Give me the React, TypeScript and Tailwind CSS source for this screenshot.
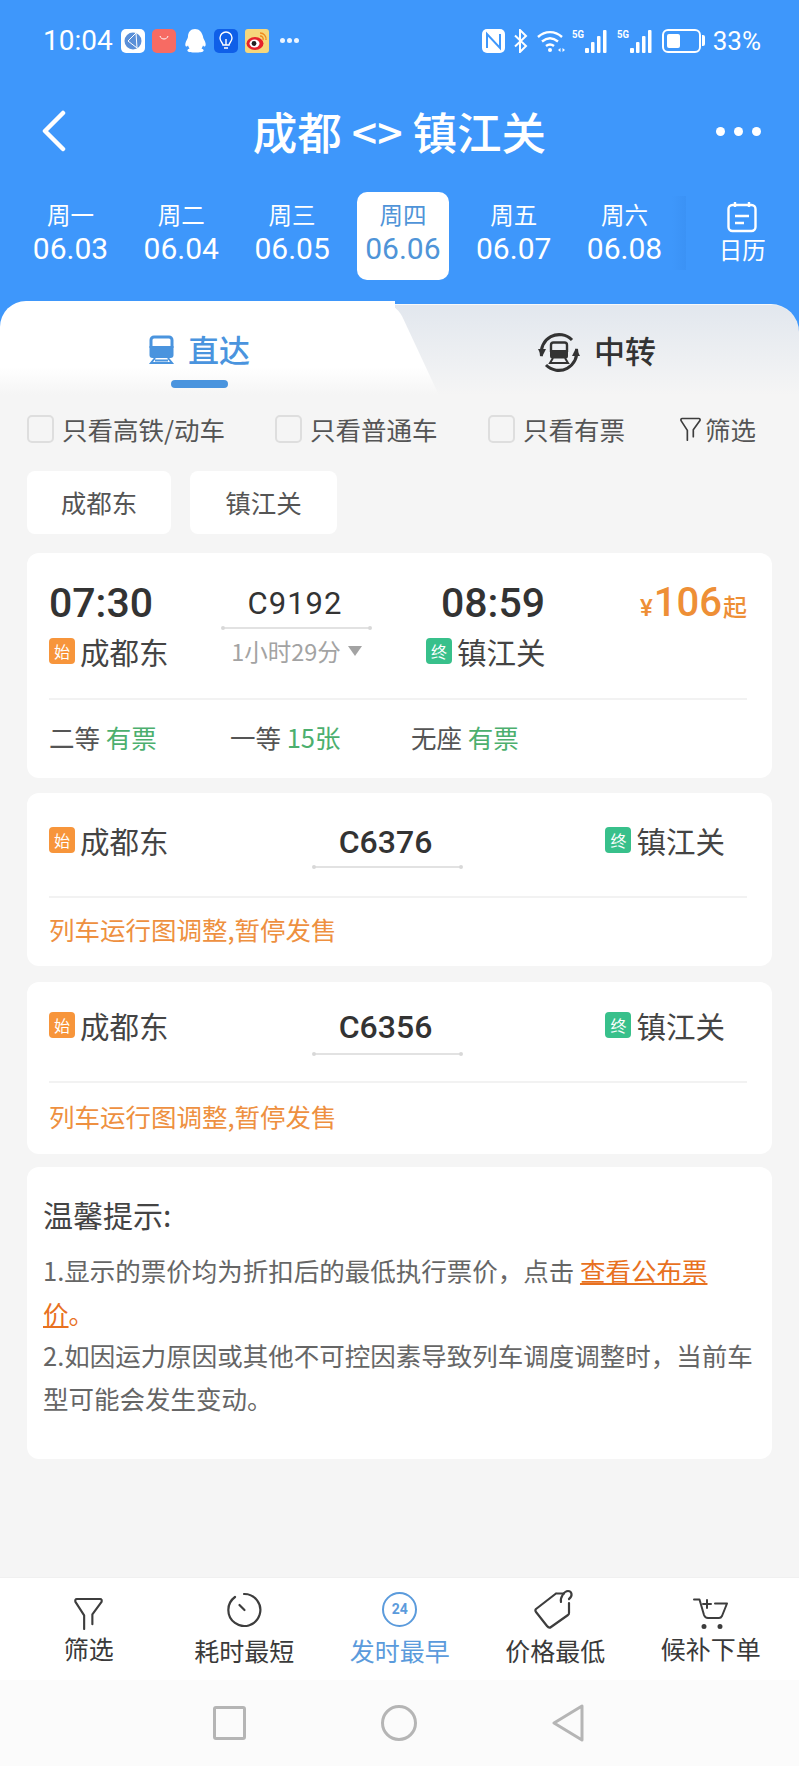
import React from 'react';

const days = [
  { w: '周一', d: '06.03' },
  { w: '周二', d: '06.04' },
  { w: '周三', d: '06.05' },
  { w: '周四', d: '06.06', active: true },
  { w: '周五', d: '06.07' },
  { w: '周六', d: '06.08' },
];

function Signal() {
  return (
    <svg width="38" height="26" viewBox="0 0 38 26" fill="white">
      <text x="0" y="10" fontSize="11" fontWeight="700" textLength="12" lengthAdjust="spacingAndGlyphs" fontFamily="Roboto, sans-serif">5G</text>
      <rect x="13" y="20" width="4" height="5" rx="1" />
      <rect x="19" y="14" width="3.500" height="11" rx="1" />
      <rect x="25" y="8" width="3.500" height="17" rx="1" />
      <rect x="31" y="2" width="3.500" height="23" rx="1" />
    </svg>
  );
}

function StatusBar() {
  return (
    <div className="h-[80px] flex items-center justify-between pl-[43px] pr-[38px] text-white pt-[1px]">
      <div className="flex items-center">
        <span className="text-[28px] leading-none w-[78px] font-['Roboto',sans-serif]">10:04</span>
        <div className="flex items-center gap-[7px]">
          <div className="w-[24px] h-[24px] rounded-[5px] bg-white flex items-center justify-center">
            <svg width="20" height="20" viewBox="0 0 20 20" fill="none">
              <circle cx="10" cy="10" r="8.500" fill="#5b8fd8" />
              <path d="M13 2 5 10l9 7M13 2l1 15" stroke="white" strokeWidth="1" />
            </svg>
          </div>
          <div className="w-[24px] h-[24px] rounded-[5px] bg-[#f76b63] flex items-start justify-center">
            <svg width="12" height="10" viewBox="0 0 12 10" fill="none" className="mt-[6px]">
              <path d="M2 1c1 4 7 4 8 0" stroke="white" strokeWidth="1" />
            </svg>
          </div>
          <svg width="24" height="26" viewBox="0 0 24 26" fill="white">
            <path d="M12 1c-4.500 0-7 3.500-7 7.500 0 1.500-1 2.500-2 5-1 2.500-1 5 .5 5 .7 0 1-.5 1.500-1 .3 1 .8 2 1.500 3-1.500.5-2.500 1.500-2 2.500.5 1 4 1.500 8 1.500s7.500-.5 8-1.500c.5-1-.5-2-2-2.500.7-1 1.200-2 1.500-3 .5.500.8 1 1.500 1 1.500 0 1.500-2.500.5-5s-2-3.500-2-5C19 4.500 16.500 1 12 1Z" />
          </svg>
          <div className="w-[24px] h-[24px] rounded-[5px] bg-[#0f5fe8] flex items-center justify-center">
            <svg width="16" height="20" viewBox="0 0 16 20" fill="none" stroke="white" strokeWidth="1.400">
              <path d="M5 14c0-2-3-3.500-3-7a6 6 0 0 1 12 0c0 3.500-3 5-3 7Z" />
              <path d="M8 14V8M6 17h4" />
            </svg>
          </div>
          <div className="w-[24px] h-[24px] rounded-[3px] bg-[#f6d77c] flex items-center justify-center">
            <svg width="22" height="20" viewBox="0 0 22 20">
              <ellipse cx="9" cy="12.500" rx="8.500" ry="6.500" fill="#e6232b" />
              <ellipse cx="8.500" cy="12.500" rx="5" ry="4" fill="white" />
              <circle cx="8" cy="12.500" r="2.400" fill="#222" />
              <path d="M14 2a6 6 0 0 1 6 7M14 5a3 3 0 0 1 3 4" stroke="#f08a1d" strokeWidth="1.400" fill="none" />
            </svg>
          </div>
          <div className="flex gap-[2px] ml-[4px]">
            <span className="w-[5px] h-[5px] rounded-full bg-white/90" />
            <span className="w-[5px] h-[5px] rounded-full bg-white/90" />
            <span className="w-[5px] h-[5px] rounded-full bg-white/90" />
          </div>
        </div>
      </div>
      <div className="flex items-center">
        <svg width="23" height="24" viewBox="0 0 23 24" className="mr-[8px]">
          <rect width="23" height="24" rx="5" fill="white" />
          <path d="M5 19V5l13 14V5" stroke="#3e97fb" strokeWidth="2" fill="none" />
        </svg>
        <svg width="16" height="24" viewBox="0 0 16 24" fill="none" stroke="white" strokeWidth="2" className="mr-[8px]">
          <path d="M2 6.500 13 17l-6 6V1l6 6L2 17.500" />
        </svg>
        <svg width="30" height="24" viewBox="0 0 30 24" fill="none" stroke="white" strokeWidth="2.400" className="mr-[5px]">
          <path d="M1 8c7-6.500 17-6.500 24 0M5 12.500c5-4 11-4 16 0M9 17c2.500-2 5.500-2 8 0" />
          <circle cx="13" cy="21" r="2" fill="white" stroke="none" />
          <path d="m21 21 2.500-2v4Zm7 0-2.500-2v4Z" fill="white" stroke="none" />
        </svg>
        <div className="mr-[7px]"><Signal /></div>
        <div className="mr-[7px]"><Signal /></div>
        <div className="w-[39px] h-[24px] rounded-[6px] border-2 border-white p-[3px]">
          <div className="w-[13px] h-full bg-white rounded-[2px]" />
        </div>
        <div className="w-[3px] h-[11px] bg-white rounded-r-[2px] ml-[1px] mr-[8px]" />
        <span className="text-[26px] leading-none font-['Roboto',sans-serif]">33%</span>
      </div>
    </div>
  );
}

function DateStrip() {
  return (
    <div className="flex items-start pl-[24.500px] h-[109px]">
      {days.map((day) => (
        <div
          key={day.d}
          className={`w-[92px] mr-[18.800px] h-[88px] pt-[9px] flex flex-col items-center rounded-[10px] ${
            day.active ? 'bg-white text-[#4f94d8]' : 'text-white'
          }`}
        >
          <span className="text-[23.500px] leading-[26px]">{day.w}</span>
          <span className="text-[30px] leading-[36px] mt-[4px] font-['Roboto',sans-serif]">{day.d}</span>
        </div>
      ))}
      <div className="relative flex flex-col items-center text-white w-[92px] ml-[7px] pt-[9px]">
        <span className="absolute -left-[24px] top-[4px] w-[14px] h-[74px] bg-gradient-to-r from-transparent to-[#3b92f5]" />
        <svg width="32" height="32" viewBox="0 0 32 32" fill="none" stroke="white" strokeWidth="2.400">
          <rect x="2.500" y="4" width="27" height="26" rx="4" />
          <path d="M9 1v5M23 1v5M9 15h14M9 22h9" />
        </svg>
        <span className="text-[23.500px] leading-[26px] mt-[3px]">日历</span>
      </div>
    </div>
  );
}

function TrainIcon() {
  return (
    <svg width="27" height="29" viewBox="0 0 27 29" fill="none" stroke="#4a94de">
      <path d="M3 13V5a3 3 0 0 1 3-3h15a3 3 0 0 1 3 3v8" strokeWidth="3" />
      <path d="M1.500 11h24v9a3 3 0 0 1-3 3h-18a3 3 0 0 1-3-3Z" fill="#4a94de" stroke="none" />
      <path d="M7 23 3 28h21l-4-5M7 25.500h13" strokeWidth="2" />
    </svg>
  );
}

function TransferIcon() {
  return (
    <svg width="42" height="41" viewBox="0 0 42 41" fill="none" stroke="#333">
      <path d="M3.500 24A18 18 0 0 1 34 8" strokeWidth="3" />
      <path d="M38.500 17A18 18 0 0 1 8 33" strokeWidth="3" />
      <path d="M0 17h8l-4 8ZM34 24h8l-4-8Z" fill="#333" stroke="none" />
      <path d="M13 20v-7a2.500 2.500 0 0 1 2.500-2.500h11A2.500 2.500 0 0 1 29 13v7" strokeWidth="2.400" />
      <path d="M12 18h18v6a2.500 2.500 0 0 1-2.500 2.500h-13A2.500 2.500 0 0 1 12 24Z" fill="#333" stroke="none" />
      <path d="m15 26-3 5h18l-3-5" strokeWidth="2" />
    </svg>
  );
}

function Tabs() {
  return (
    <div className="flex h-[94px] bg-[#3e97fb]">
      <div className="relative w-[395px] h-full bg-gradient-to-b from-white from-70% to-[#f5f5f5] rounded-tl-[26px] z-10 pl-[148px] pt-[28px]">
        <div className="absolute top-0 right-0 w-[60px] h-full bg-gradient-to-b from-white from-70% to-[#f5f5f5] skew-x-[25deg] rounded-tr-[16px] origin-top -z-10" />
        <div className="flex items-center gap-[13px]">
          <TrainIcon />
          <span className="text-[31px] leading-[40px] text-[#4a94de] font-medium">直达</span>
        </div>
        <div className="absolute left-[171px] bottom-[7px] w-[57px] h-[8px] rounded-full bg-[#4a94de]" />
      </div>
      <div className="flex-1 h-[91px] mt-[3px] bg-gradient-to-b from-[#e2e7ee] to-[#f5f5f5] rounded-tr-[28px] border-t border-white/30 flex items-start pl-[143px] pt-[27px] gap-[14px]">
        <TransferIcon />
        <span className="text-[31px] leading-[40px] text-[#333] font-medium -mt-[2px]">中转</span>
      </div>
    </div>
  );
}

function Check({ label, className }: { label: string; className: string }) {
  return (
    <div className={`flex items-center ${className}`}>
      <div className="w-[27px] h-[28px] rounded-[5px] border-2 border-[#dedede] mr-[8px]" />
      <span className="text-[25.500px] leading-[30px] text-[#555]">{label}</span>
    </div>
  );
}

function Tag({ kind }: { kind: 'start' | 'end' }) {
  return (
    <span
      className={`w-[26px] h-[26px] rounded-[4px] text-white text-[16px] leading-none flex items-center justify-center mr-[5px] ${
        kind === 'start' ? 'bg-[#f7953b]' : 'bg-[#38c08b]'
      }`}
    >
      {kind === 'start' ? '始' : '终'}
    </span>
  );
}

function Station({ kind, name }: { kind: 'start' | 'end'; name: string }) {
  return (
    <div className="flex items-center">
      <Tag kind={kind} />
      <span className="text-[29.500px] leading-[36px] text-[#444]">{name}</span>
    </div>
  );
}

function TrainLine() {
  return (
    <div className="relative h-[2px] bg-[#e2e2e2] w-[149px]">
      <span className="absolute -left-[1px] -top-[1px] w-[4px] h-[4px] rounded-full bg-[#d8d8d8]" />
      <span className="absolute -right-[1px] -top-[1px] w-[4px] h-[4px] rounded-full bg-[#d8d8d8]" />
    </div>
  );
}

function SuspendedCard({
  code,
  className,
  rowClass,
  lineClass,
  noteClass,
}: {
  code: string;
  className: string;
  rowClass: string;
  lineClass: string;
  noteClass: string;
}) {
  return (
    <div className={`bg-white rounded-[12px] pl-[22px] pr-[25px] ${className}`}>
      <div className={`flex items-start border-b-2 border-[#f2f2f2] ${rowClass}`}>
        <div className="-mt-[2px]">
          <Station kind="start" name="成都东" />
        </div>
        <div className="flex flex-col items-center ml-[144px] w-[149px]">
          <span className="text-[32px] leading-[36px] text-[#333] font-medium font-['Roboto',sans-serif] pr-[3px]">{code}</span>
          <div className={lineClass}><TrainLine /></div>
        </div>
        <div className="ml-auto mr-[22px] -mt-[2px]">
          <Station kind="end" name="镇江关" />
        </div>
      </div>
      <div className={`text-[25.500px] leading-[30px] text-[#ee9040] ${noteClass}`}>列车运行图调整,暂停发售</div>
    </div>
  );
}

function FilterIcon({ width, height, stroke }: { width: number; height: number; stroke: number }) {
  return (
    <svg width={width} height={height} viewBox="0 0 30 34" fill="none" stroke="#3d3d3d" strokeWidth={stroke} strokeLinecap="round" strokeLinejoin="round">
      <path d="M10.500 33V19L1.500 5Q.8 2 3 2h24q2.200 0 1.500 3L19 18v10" />
    </svg>
  );
}

function BottomItem({ icon, label, active, high }: { icon: React.ReactNode; label: string; active?: boolean; high?: boolean }) {
  return (
    <div className="flex flex-col items-center w-[155.500px]">
      <div className="h-[46px] flex items-center justify-center">{icon}</div>
      <span className={`text-[25px] leading-[32px] ${high ? '-mt-[2px]' : ''} ${active ? 'text-[#5b9bdc]' : 'text-[#3a3a3a]'}`}>{label}</span>
    </div>
  );
}

export default function App() {
  return (
    <div className="w-[799px] h-[1766px] overflow-hidden bg-[#f5f5f5] flex flex-col font-['Noto_Sans_CJK_SC','Noto_Sans',sans-serif]">
      <div className="bg-[#3e97fb]">
        <StatusBar />
        {/* title */}
        <div className="h-[102px] grid grid-cols-[1fr_auto_1fr] items-center text-white mb-[10px]">
          <svg width="26" height="42" viewBox="0 0 26 42" fill="none" stroke="white" strokeWidth="4.500" strokeLinecap="round" strokeLinejoin="round" className="ml-[41px]">
            <path d="M22 3 4 21l18 18" />
          </svg>
          <span className="text-[44.500px] leading-[50px] font-medium">成都 &lt;&gt; 镇江关</span>
          <div className="justify-self-end mr-[38px] flex gap-[9px]">
            <span className="w-[9px] h-[9px] rounded-full bg-white" />
            <span className="w-[9px] h-[9px] rounded-full bg-white" />
            <span className="w-[9px] h-[9px] rounded-full bg-white" />
          </div>
        </div>
        <DateStrip />
      </div>
      <Tabs />

      <div className="flex items-center h-[67px] pl-[27px]">
        <Check label="只看高铁/动车" className="w-[248px]" />
        <Check label="只看普通车" className="w-[213px]" />
        <Check label="只看有票" className="w-[192px]" />
        <FilterIcon width={21} height={24} stroke={2.400} />
        <span className="text-[25.500px] leading-[30px] text-[#555] ml-[4px]">筛选</span>
      </div>

      <div className="flex gap-[19px] px-[27px] mt-[9px]">
        <div className="w-[144px] h-[63px] bg-white rounded-[8px] flex items-center justify-center text-[25.500px] text-[#555]">成都东</div>
        <div className="w-[147px] h-[63px] bg-white rounded-[8px] flex items-center justify-center text-[25.500px] text-[#555]">镇江关</div>
      </div>

      <div className="mx-[27px] mt-[19px] bg-white rounded-[12px] h-[225px] pl-[22px] pr-[25px]">
        <div className="flex h-[147px] border-b-2 border-[#f2f2f2] pt-[26px]">
          <div className="w-[170px] shrink-0">
            <div className="text-[41px] leading-[48px] text-[#333] font-medium font-['Roboto',sans-serif]">07:30</div>
            <div className="mt-[6px]"><Station kind="start" name="成都东" /></div>
          </div>
          <div className="w-[149px] ml-[3px] flex flex-col items-center shrink-0">
            <span className="text-[31px] leading-[38px] text-[#333] mt-[6px] pr-[3px] font-['Roboto',sans-serif] tracking-[1px]">C9192</span>
            <div className="mt-[4px]"><TrainLine /></div>
            <div className="flex items-center mt-[7px] text-[#a3a3a3]">
              <span className="text-[23.500px] leading-[30px]">1小时29分</span>
              <span className="ml-[7px] w-0 h-0 border-x-[7px] border-x-transparent border-t-[10px] border-t-[#a3a3a3]" />
            </div>
          </div>
          <div className="ml-[55px] shrink-0 w-[140px]">
            <div className="text-[41px] leading-[48px] text-[#333] font-medium font-['Roboto',sans-serif] ml-[15px]">08:59</div>
            <div className="mt-[6px]"><Station kind="end" name="镇江关" /></div>
          </div>
          <div className="ml-auto text-[#ee8f36] font-medium flex items-baseline h-[48px]">
            <span className="text-[24px] font-['Roboto',sans-serif]">¥</span>
            <span className="text-[40px] leading-[48px] font-['Roboto',sans-serif] ml-[1px]">106</span>
            <span className="text-[24px] ml-[1px]">起</span>
          </div>
        </div>
        <div className="flex items-center h-[76px] text-[25.500px] leading-[30px] text-[#555] pb-[2px]">
          <div className="w-[181px]">二等 <span className="text-[#4caf6e]">有票</span></div>
          <div className="w-[181px]">一等 <span className="text-[#4caf6e]">15张</span></div>
          <div>无座 <span className="text-[#4caf6e]">有票</span></div>
        </div>
      </div>

      <SuspendedCard code="C6376" className="mx-[27px] mt-[15px] h-[173px]" rowClass="h-[105px] pt-[31px]" lineClass="mt-[6px]" noteClass="pt-[16px]" />
      <SuspendedCard code="C6356" className="mx-[27px] mt-[16px] h-[172px]" rowClass="h-[101px] pt-[27px]" lineClass="mt-[8px]" noteClass="pt-[18px]" />

      <div className="mx-[27px] mt-[13px] h-[292px] bg-white rounded-[12px] pl-[16px] pr-[16px] pt-[29px]">
        <div className="text-[30px] leading-[36px] text-[#444]">温馨提示:</div>
        <div className="text-[25.500px] leading-[42.500px] text-[#666] mt-[17px]">
          <p>
            1.显示的票价均为折扣后的最低执行票价，点击{' '}
            <span className="text-[#e8711f] underline">查看公布票</span>
            <br />
            <span className="text-[#e8711f] underline">价</span>
            <span className="text-[#e8711f]">。</span>
          </p>
          <p>2.如因运力原因或其他不可控因素导致列车调度调整时，当前车型可能会发生变动。</p>
        </div>
      </div>

      <div className="flex-1" />

      <div className="h-[102px] bg-white flex items-start pt-[10px] pl-[11px] shadow-[0_-1px_0_#f0f0f0]">
        <BottomItem high label="筛选" icon={<span className="mt-[5px]"><FilterIcon width={29} height={33} stroke={2.200} /></span>} />
        <BottomItem
          label="耗时最短"
          icon={
            <svg width="35" height="35" viewBox="0 0 35 35" fill="none" stroke="#3d3d3d" strokeWidth="2.200" strokeLinecap="round" className="-mb-[1px] -mt-[5px]">
              <path d="M17 2v0a16 16 0 1 1-9 3" />
              <path d="m12.500 13 5 5" />
            </svg>
          }
        />
        <BottomItem
          active
          label="发时最早"
          icon={
            <div className="w-[35px] h-[35px] -mt-[3px] rounded-full border-2 border-[#5b9bdc] flex items-center justify-center text-[14px] font-bold text-[#5b9bdc] font-['Roboto',sans-serif]">
              24
            </div>
          }
        />
        <BottomItem
          label="价格最低"
          icon={
            <svg width="42" height="40" viewBox="0 0 42 40" fill="none" stroke="#3d3d3d" strokeWidth="2.200" strokeLinecap="round" strokeLinejoin="round" className="-mt-[4px]">
              <path d="M22 4.500 2 20Q.8 21.500 2 23l11 14q2 2.500 4 1l17-12q1-.5 1-2V14M22 4.500h8" />
              <path d="M27 13c-1-4 3-11 7-11s5 5 1 8" />
            </svg>
          }
        />
        <BottomItem
          high
          label="候补下单"
          icon={
            <svg width="36" height="31" viewBox="0 0 36 31" fill="none" stroke="#3d3d3d" strokeWidth="2" strokeLinecap="round" strokeLinejoin="round" className="mt-[4px]">
              <path d="M1 1.500h5.500L11 17q1 3 4 3h11q2 0 3-2l5-12.500H22" />
              <path d="M10 6h8M14 2v8" />
              <circle cx="11" cy="28.500" r="1.500" fill="#3d3d3d" />
              <circle cx="27" cy="28.500" r="1.500" fill="#3d3d3d" />
            </svg>
          }
        />
      </div>

      <div className="h-[86px] bg-[#fbfbfb] flex items-center justify-center gap-[135px] pr-[3px]">
        <div className="w-[33px] h-[34px] rounded-[3px] border-[3px] border-[#b5b5b5]" />
        <div className="w-[36px] h-[36px] border-[3px] border-[#b5b5b5] rounded-full" />
        <svg width="32" height="38" viewBox="0 0 32 38" fill="none" stroke="#b5b5b5" strokeWidth="3" strokeLinejoin="round">
          <path d="M30 2v34L2 19Z" />
        </svg>
      </div>
    </div>
  );
}
